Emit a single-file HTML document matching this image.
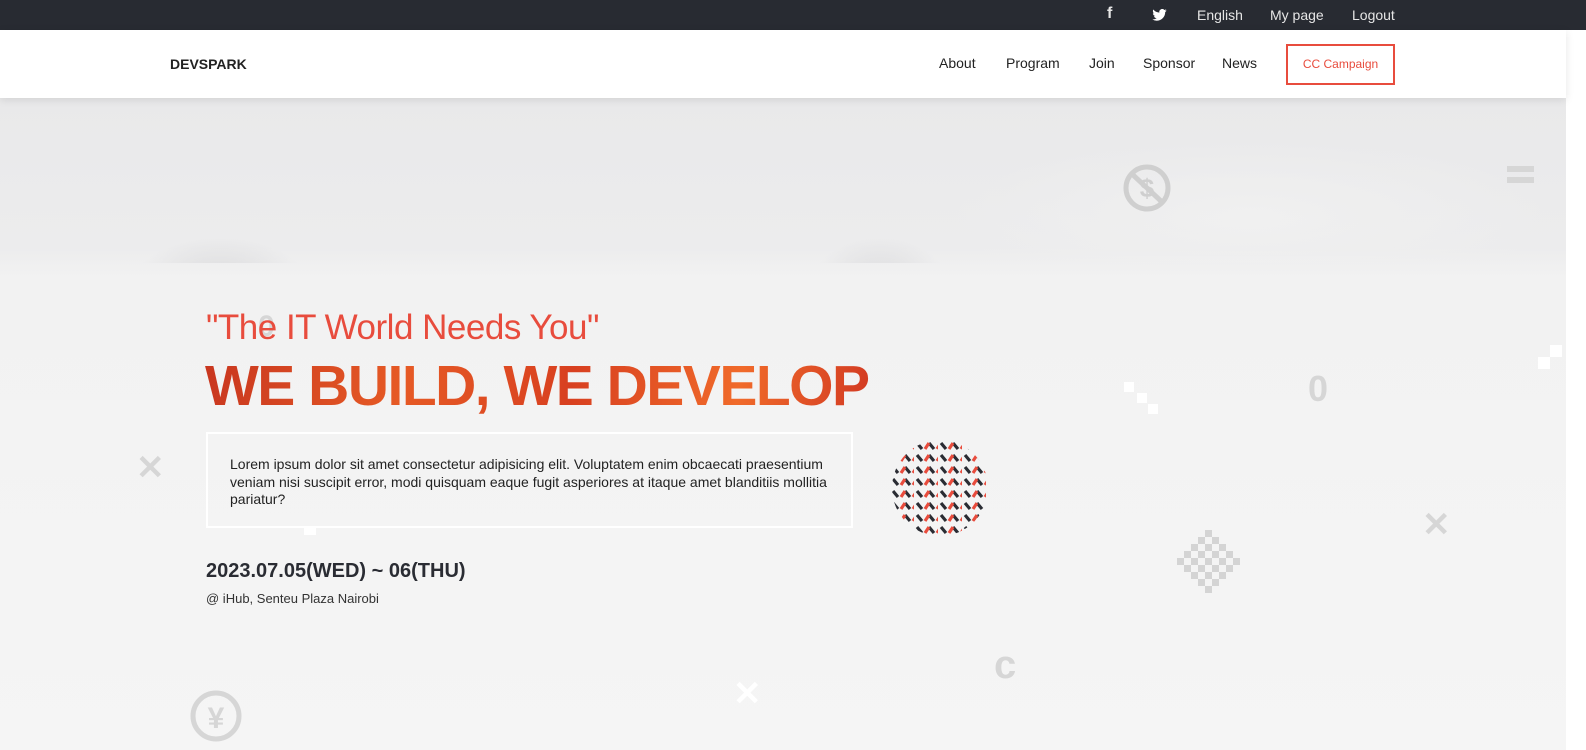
<!DOCTYPE html>
<html><head><meta charset="utf-8"><style>
*{margin:0;padding:0;box-sizing:border-box}
body{width:1586px;height:750px;overflow:hidden;font-family:"Liberation Sans",sans-serif;background:#f4f4f4;position:relative}
.top{position:absolute;left:0;top:0;width:1586px;height:30px;background:#282b32;color:#e6e6e6;font-size:14px}
.top span{position:absolute;top:7px}
.nav{position:absolute;left:0;top:30px;width:1566px;height:68px;background:#fff;box-shadow:0 2px 8px rgba(0,0,0,.1);z-index:2}
.nav a{position:absolute;top:25px;font-size:14px;color:#222;text-decoration:none}
.hero{position:absolute;left:0;top:98px;width:1566px;height:652px;background:linear-gradient(#e9e9ea 0,#ececed 150px,#f2f2f2 180px,#f5f5f5 652px)}
.photo{position:absolute;left:0;top:98px;width:1566px;height:165px;background:
radial-gradient(ellipse 90px 50px at 220px 190px,#d6d6d8,transparent),
radial-gradient(ellipse 70px 50px at 880px 190px,#d8d8da,transparent),
radial-gradient(ellipse 300px 80px at 1250px 120px,#f0f0f0,transparent);}
.strip{position:absolute;right:0;top:30px;width:20px;height:720px;background:#fff}
h2{position:absolute;left:206px;top:308px;font-size:35px;font-weight:400;color:#e84c3d;letter-spacing:-0.5px}
h1{position:absolute;left:205px;top:353px;font-size:57px;font-weight:900;letter-spacing:-1.5px;background:linear-gradient(100deg,#c8361f,#e65a25 30%,#d84020 55%,#f06a2a 80%,#d23a22);-webkit-background-clip:text;background-clip:text;color:transparent}
.box{position:absolute;left:206px;top:432px;width:647px;height:96px;border:2px solid #fff;padding:22px 22px;font-size:14px;line-height:17.5px;color:#222}
.date{position:absolute;left:206px;top:560px;font-size:20px;font-weight:700;color:#2a2c33}
.loc{position:absolute;left:206px;top:591px;font-size:13px;color:#333}
.g{position:absolute;color:#d6d6d6;font-weight:700}
</style></head><body>
<div class="top">
<span style="left:1107px;font-weight:700;font-size:16px;top:5px">f</span>
<svg style="position:absolute;left:1152px;top:9px" width="15" height="12" viewBox="0 0 24 20"><path fill="#fff" d="M24 2.4a10 10 0 0 1-2.8.8A5 5 0 0 0 23.3.4a10 10 0 0 1-3.1 1.2A4.9 4.9 0 0 0 11.8 6 14 14 0 0 1 1.7.9a4.9 4.9 0 0 0 1.5 6.6 4.9 4.9 0 0 1-2.2-.6 4.9 4.9 0 0 0 3.9 4.8 4.9 4.9 0 0 1-2.2.1 4.9 4.9 0 0 0 4.6 3.4A9.9 9.9 0 0 1 0 17.3 14 14 0 0 0 7.5 19.5c9 0 14-7.5 14-14v-.6A10 10 0 0 0 24 2.4z"/></svg>
<span style="left:1197px">English</span>
<span style="left:1270px">My page</span>
<span style="left:1352px">Logout</span>
</div>
<div class="hero"></div>
<div class="photo"></div>
<div class="strip"></div>
<div class="nav">
<span style="position:absolute;left:170px;top:26px;font-size:14px;font-weight:700;color:#222">DEVSPARK</span>
<a style="left:939px">About</a><a style="left:1006px">Program</a><a style="left:1089px">Join</a><a style="left:1143px">Sponsor</a><a style="left:1222px">News</a>
<div style="position:absolute;left:1286px;top:14px;width:109px;height:41px;border:2px solid #e84c3d;color:#e84c3d;font-size:12px;text-align:center;line-height:37px">CC Campaign</div>
</div>
<svg style="position:absolute;left:1122px;top:164px" width="50" height="48" viewBox="0 0 50 48"><circle cx="25" cy="24" r="21" fill="none" stroke="#cfcfcf" stroke-width="5"/><line x1="10" y1="10" x2="40" y2="38" stroke="#cfcfcf" stroke-width="5"/><text x="25" y="33" text-anchor="middle" font-size="26" font-weight="700" fill="#cfcfcf" font-family="Liberation Sans">$</text></svg>
<div style="position:absolute;left:1507px;top:166px;width:27px;height:6px;background:#d6d6d6"></div>
<div style="position:absolute;left:1507px;top:177px;width:27px;height:6px;background:#d6d6d6"></div>
<div class="g" style="left:258px;top:310px;font-size:30px">0</div>
<div class="g" style="left:1308px;top:368px;font-size:36px">0</div>
<div class="g" style="left:994px;top:643px;font-size:40px">c</div>
<div class="g" style="left:136px;top:448px;font-size:34px">✕</div>
<div class="g" style="left:1422px;top:505px;font-size:34px">✕</div>
<div class="g" style="left:733px;top:674px;font-size:34px;color:#fff">✕</div>
<svg style="position:absolute;left:188px;top:688px" width="56" height="62"><circle cx="28" cy="28" r="23" fill="none" stroke="#d6d6d6" stroke-width="5"/><text x="28" y="40" text-anchor="middle" font-size="30" font-weight="700" fill="#d6d6d6" font-family="Liberation Sans">¥</text></svg>
<svg style="position:absolute;left:1172px;top:530px" width="75" height="72"><g fill="#d4d4d4">
<rect x="33" y="0" width="7" height="7"/><rect x="26" y="7" width="7" height="7"/><rect x="40" y="7" width="7" height="7"/>
<rect x="19" y="14" width="7" height="7"/><rect x="33" y="14" width="7" height="7"/><rect x="47" y="14" width="7" height="7"/>
<rect x="12" y="21" width="7" height="7"/><rect x="26" y="21" width="7" height="7"/><rect x="40" y="21" width="7" height="7"/><rect x="54" y="21" width="7" height="7"/>
<rect x="5" y="28" width="7" height="7"/><rect x="19" y="28" width="7" height="7"/><rect x="33" y="28" width="7" height="7"/><rect x="47" y="28" width="7" height="7"/><rect x="61" y="28" width="7" height="7"/>
<rect x="12" y="35" width="7" height="7"/><rect x="26" y="35" width="7" height="7"/><rect x="40" y="35" width="7" height="7"/><rect x="54" y="35" width="7" height="7"/>
<rect x="19" y="42" width="7" height="7"/><rect x="33" y="42" width="7" height="7"/><rect x="47" y="42" width="7" height="7"/>
<rect x="26" y="49" width="7" height="7"/><rect x="40" y="49" width="7" height="7"/><rect x="33" y="56" width="7" height="7"/></g></svg>
<div style="position:absolute;left:1124px;top:382px;width:10px;height:10px;background:#fff"></div>
<div style="position:absolute;left:1137px;top:393px;width:10px;height:10px;background:#fff"></div>
<div style="position:absolute;left:1148px;top:404px;width:10px;height:10px;background:#fff"></div>
<div style="position:absolute;left:1550px;top:345px;width:12px;height:12px;background:#fff"></div>
<div style="position:absolute;left:1538px;top:357px;width:12px;height:12px;background:#fff"></div>
<h2>"The IT World Needs You"</h2>
<h1>WE BUILD, WE DEVELOP</h1>
<div class="box">Lorem ipsum dolor sit amet consectetur adipisicing elit. Voluptatem enim obcaecati praesentium veniam nisi suscipit error, modi quisquam eaque fugit asperiores at itaque amet blanditiis mollitia pariatur?</div>
<div style="position:absolute;left:304px;top:528px;width:12px;height:7px;background:#fff"></div>
<svg style="position:absolute;left:890px;top:440px" width="100" height="96" viewBox="0 0 100 96">
<defs><clipPath id="c"><circle cx="50" cy="48" r="48"/></clipPath>
<pattern id="p" width="24" height="12" patternUnits="userSpaceOnUse"><path d="M3 3l5 6M15 3l5 6" stroke="#2a2c33" stroke-width="3.2"/><path d="M11 9l4-6M23 9l4-6" stroke="#e84c3d" stroke-width="3.2"/></pattern></defs>
<rect width="100" height="96" fill="url(#p)" clip-path="url(#c)"/></svg>
<div class="date">2023.07.05(WED) ~ 06(THU)</div>
<div class="loc">@ iHub, Senteu Plaza Nairobi</div>
</body></html>
